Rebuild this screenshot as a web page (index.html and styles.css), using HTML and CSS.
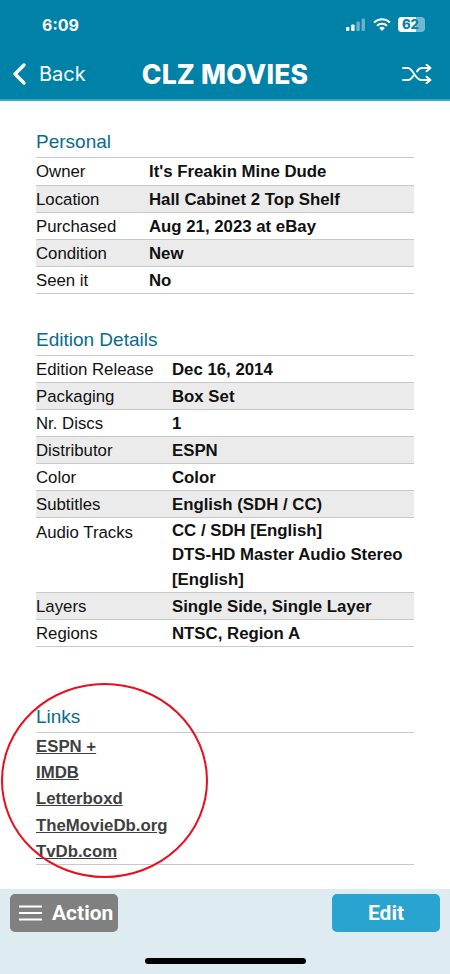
FILE: index.html
```html
<!DOCTYPE html>
<html lang="en">
<head>
  <meta charset="UTF-8" />
  <meta name="viewport" content="width=device-width, initial-scale=1" />
  <title>CLZ Movies</title>
  <link rel="stylesheet" href="styles.css">
</head>
<body>
  <header>
    <div class="status-bar">
      <span class="time">6:09</span>
      <div class="status-icons">
        <svg class="signal" width="20" height="13" viewBox="0 0 20 13">
          <rect x="0" y="9" width="3.4" height="4" rx="1" fill="#fff"/>
          <rect x="5.2" y="6.5" width="3.4" height="6.5" rx="1" fill="#fff"/>
          <rect x="10.4" y="3.5" width="3.4" height="9.5" rx="1" fill="#fff" opacity="0.4"/>
          <rect x="15.6" y="0.5" width="3.4" height="12.5" rx="1" fill="#fff" opacity="0.4"/>
        </svg>
        <svg class="wifi" width="18" height="13" viewBox="0 0 18 13">
          <path d="M1 4.6a11.5 11.5 0 0 1 16 0" fill="none" stroke="#fff" stroke-width="2"/>
          <path d="M4 7.7a7.2 7.2 0 0 1 10 0" fill="none" stroke="#fff" stroke-width="2"/>
          <path d="M9 13l-2.8-3a4 4 0 0 1 5.6 0z" fill="#fff"/>
        </svg>
        <div class="battery"><span class="battery-level">62</span></div>
      </div>
    </div>
    <nav class="nav-bar">
      <button class="back-btn">
        <svg width="16" height="24" viewBox="0 0 16 24"><path d="M13 3L4 12l9 9" fill="none" stroke="#fff" stroke-width="3.4" stroke-linecap="round" stroke-linejoin="round"/></svg>
        Back
      </button>
      <h1>CLZ MOVIES</h1>
      <button class="shuffle-btn" aria-label="Random">
        <svg width="30" height="20" viewBox="0 0 30 20" fill="none" stroke="#fff" stroke-width="1.9" stroke-linecap="round" stroke-linejoin="round">
          <path d="M1 4h5c5 0 7 12 13 12h9"/>
          <path d="M1 16h5c2.500 0 4-2 5.500-4.500M15 7.500C16 5.500 17.500 4 20 4h8"/>
          <path d="M24.500 0.800L28.500 4l-4 3.200M24.500 12.800l4 3.200-4 3.200"/>
        </svg>
      </button>
    </nav>
  </header>

  <main>
    <section class="personal">
      <h2>Personal</h2>
      <table>
        <tr><td class="label">Owner</td><td>It's Freakin Mine Dude</td></tr>
        <tr><td class="label">Location</td><td>Hall Cabinet 2 Top Shelf</td></tr>
        <tr><td class="label">Purchased</td><td>Aug 21, 2023 at eBay</td></tr>
        <tr><td class="label">Condition</td><td>New</td></tr>
        <tr><td class="label">Seen it</td><td>No</td></tr>
      </table>
    </section>

    <section class="edition">
      <h2>Edition Details</h2>
      <table>
        <tr><td class="label">Edition Release</td><td>Dec 16, 2014</td></tr>
        <tr><td class="label">Packaging</td><td>Box Set</td></tr>
        <tr><td class="label">Nr. Discs</td><td>1</td></tr>
        <tr><td class="label">Distributor</td><td>ESPN</td></tr>
        <tr><td class="label">Color</td><td>Color</td></tr>
        <tr><td class="label">Subtitles</td><td>English (SDH / CC)</td></tr>
        <tr class="tall"><td class="label">Audio Tracks</td><td>CC / SDH [English]<br>DTS-HD Master Audio Stereo [English]</td></tr>
        <tr><td class="label">Layers</td><td>Single Side, Single Layer</td></tr>
        <tr><td class="label">Regions</td><td>NTSC, Region A</td></tr>
      </table>
    </section>

    <section class="links">
      <h2>Links</h2>
      <ul>
        <li><a href="#">ESPN +</a></li>
        <li><a href="#">IMDB</a></li>
        <li><a href="#">Letterboxd</a></li>
        <li><a href="#">TheMovieDb.org</a></li>
        <li><a href="#">TvDb.com</a></li>
      </ul>
    </section>

    <svg class="circle" width="209" height="197" viewBox="0 0 209 197">
      <ellipse cx="104.500" cy="98.500" rx="102.500" ry="96.500" fill="none" stroke="#ec0c1c" stroke-width="2"/>
    </svg>
  </main>

  <footer>
    <div class="actions">
      <button class="action-btn">
        <svg width="23" height="16" viewBox="0 0 23 16"><path d="M0 1.500h23M0 8h23M0 14.500h23" stroke="#fff" stroke-width="2"/></svg>
        Action
      </button>
      <button class="edit-btn">Edit</button>
    </div>
    <div class="home-indicator"></div>
  </footer>
</body>
</html>
```

FILE: styles.css
```css
body {
  font-family: 'Liberation Sans', Arial, sans-serif;
  background: #fff;
  margin: 0;
  padding: 0;
  color: #111;
  height: 974px;
  width: 450px;
  overflow: hidden;
  display: flex;
  flex-direction: column;
}
button {
  font-family: inherit;
  border: none;
  background: none;
  color: white;
  padding: 0;
}

/* top bar */
header {
  background-color: #0081a8;
  color: white;
  height: 99px;
  border-bottom: 2px solid #3ea3c3;
  flex-shrink: 0;
  font-family: Inter, sans-serif;
}
.status-bar {
  display: flex;
  justify-content: space-between;
  align-items: center;
  height: 49px;
  padding: 0 25px 0 42px;
}
.time {
  font-size: 16px;
  font-weight: 700;
}
.status-icons {
  display: flex;
  align-items: center;
  gap: 7px;
}
.battery {
  width: 27px;
  height: 15px;
  border-radius: 4px;
  background: #74b8ce;
  overflow: hidden;
}
.battery-level {
  display: block;
  width: 18px;
  height: 15px;
  background: white;
  color: #0081a8;
  font-size: 13px;
  font-weight: 800;
  line-height: 15px;
  padding-left: 4px;
  box-sizing: border-box;
  white-space: nowrap;
}
.nav-bar {
  display: flex;
  justify-content: space-between;
  align-items: center;
  height: 50px;
  padding: 0 18px 0 11px;
  position: relative;
}
.nav-bar h1 {
  margin: 0;
  font-size: 26.5px;
  font-weight: 800;
  letter-spacing: 0.2px;
  position: absolute;
  left: 0;
  right: 0;
  text-align: center;
}
.back-btn {
  display: flex;
  align-items: center;
  gap: 12px;
  font-size: 20px;
  font-weight: 400;
  z-index: 1;
}
.shuffle-btn {
  display: flex;
  z-index: 1;
}

/* details */
main {
  flex-grow: 1;
  padding: 0 36px;
  position: relative;
}
h2 {
  margin: 0;
  font-size: 19px;
  font-weight: 400;
  line-height: 20px;
  color: #0a6b8c;
  border-bottom: 1px solid #c9c9c9;
  padding-bottom: 5px;
}
.personal { margin-top: 31px; }
.edition { margin-top: 36px; }
.links { margin-top: 60px; }
table {
  width: 100%;
  border-collapse: collapse;
  font-size: 16.8px;
}
td {
  box-sizing: border-box;
  height: 27px;
  padding: 1px 0 0;
  border-bottom: 1px solid #c9c9c9;
  font-weight: 700;
  line-height: 25px;
  vertical-align: top;
}
td.label {
  font-weight: 400;
  white-space: nowrap;
}
.tall td {
  line-height: 24.3px;
}
.tall td.label {
  padding-top: 3px;
}
tr:nth-child(even) {
  background-color: #ebebeb;
}
.personal td.label { width: 113px; }
.edition td.label { width: 136px; }
.links ul {
  list-style: none;
  margin: 0;
  padding: 0;
  border-bottom: 1px solid #c9c9c9;
}
.links li {
  height: 26.300px;
  line-height: 27px;
  font-size: 16.8px;
  font-weight: 700;
}
.links a {
  color: #3f3f3f;
}
.circle {
  position: absolute;
  left: 0;
  top: 581px;
}

/* bottom bar */
footer {
  background-color: #deebf1;
  height: 85px;
  flex-shrink: 0;
  font-family: Roboto, sans-serif;
}
.actions {
  display: flex;
  justify-content: space-between;
  padding: 5px 10px 0;
}
.action-btn, .edit-btn {
  width: 108px;
  height: 38px;
  border-radius: 5px;
  font-size: 21px;
  font-weight: 700;
  display: flex;
  align-items: center;
}
.action-btn {
  background: #808080;
  padding-left: 9px;
  gap: 10px;
}
.edit-btn {
  background: #29a3cf;
  justify-content: center;
}
.home-indicator {
  width: 161px;
  height: 6px;
  background: #000;
  border-radius: 3px;
  margin: 26px auto 0;
}
```
